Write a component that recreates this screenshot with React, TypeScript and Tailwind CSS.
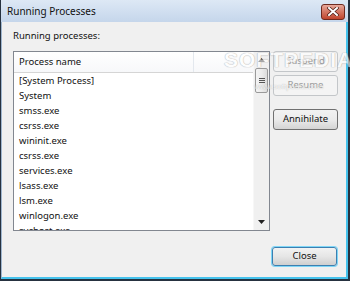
import React from "react";

const items = [
  "[System Process]",
  "System",
  "smss.exe",
  "csrss.exe",
  "wininit.exe",
  "csrss.exe",
  "services.exe",
  "lsass.exe",
  "lsm.exe",
  "winlogon.exe",
  "svchost.exe",
  "svchost.exe",
];

const font = { fontFamily: '"Noto Sans", "Liberation Sans", sans-serif' };

function Btn({ label, disabled, def, className = "" }: { label: string; disabled?: boolean; def?: boolean; className?: string }) {
  if (disabled) {
    return (
      <div className={`h-[21px] w-[65px] shrink-0 rounded-[3px] border border-[#c3c6c9] bg-[#f4f4f4] flex items-center justify-center text-[9.5px] text-[#9c9c9c] ${className}`}>
        {label}
      </div>
    );
  }
  if (def) {
    return (
      <div className={`h-[19px] w-[65px] shrink-0 rounded-[3px] border border-[#3c7fb1] shadow-[0_0_0_1px_#7fd6f6] bg-gradient-to-b from-[#f2f2f2] via-[#e6e6e6] to-[#cfcfcf] flex items-center justify-center text-[9.5px] text-[#111] ${className}`}>
        {label}
      </div>
    );
  }
  return (
    <div className={`h-[21px] w-[65px] shrink-0 rounded-[3px] border border-[#707070] bg-gradient-to-b from-[#f2f2f2] via-[#ebebeb] to-[#d4d4d4] flex items-center justify-center text-[9.5px] text-[#111] ${className}`}>
      {label}
    </div>
  );
}

export default function App() {
  return (
    <div className="relative w-[350px] h-[281px] flex flex-col border-l border-r-2 border-b-2 border-[#263240] bg-[#c9d9ec]" style={font}>
      {/* Title bar */}
      <div className="h-[22px] shrink-0 flex items-center justify-between pl-[6px] pr-[3px] bg-gradient-to-b from-[#dde8f5] to-[#c5d6eb]">
        <span className="text-[10px] text-[#111] leading-none">Running Processes</span>
        <div className="mt-[1px] h-[16px] w-[24px] rounded-[3px] border border-[#6e2a1f] bg-gradient-to-b from-[#e8a99b] via-[#d37461] to-[#c0442c] flex items-center justify-center">
          <svg width="12" height="9" viewBox="0 0 12 9">
            <path d="M2 1 L10 8 M10 1 L2 8" stroke="#4a1a12" strokeWidth="3.4" strokeLinecap="square" />
            <path d="M2 1 L10 8 M10 1 L2 8" stroke="#ffffff" strokeWidth="2" strokeLinecap="square" />
          </svg>
        </div>
      </div>
      {/* Client */}
      <div className="flex-1 flex flex-col bg-[#f0f0f0] border-l border-[#9fb6cf] border-r-2 border-b-2 border-r-[#45c2ec] border-b-[#45c2ec] pl-[11px]">
        <div className="mt-[7px] h-[14px] shrink-0 leading-[14px] text-[9.5px] text-[#111]">Running processes:</div>
        <div className="mt-[8px] shrink-0 flex gap-[3px]">
          {/* List */}
          <div className="w-[257px] h-[180px] shrink-0 border border-[#828790] bg-white flex overflow-hidden">
            <div className="flex-1 flex flex-col overflow-hidden">
              <div className="h-[21px] shrink-0 flex border-b border-[#d5d5d5] bg-gradient-to-b from-white to-[#f7f8fa]">
                <div className="w-[179px] pl-[5px] flex items-center text-[9.5px] text-[#111]">Process name</div>
                <div className="w-px bg-[#e3e8ee]" />
              </div>
              <div className="mt-[1px] shrink-0 flex flex-col">
                {items.map((t, i) => (
                  <div key={i} className="h-[15px] shrink-0 pl-[5px] flex items-center text-[9.5px] text-[#111] whitespace-nowrap">
                    {t}
                  </div>
                ))}
              </div>
            </div>
            {/* Scrollbar */}
            <div className="w-[16px] shrink-0 flex flex-col bg-[#f0f0f0] border-l border-[#f7f7f7]">
              <div className="h-[16px] shrink-0 flex items-center justify-center">
                <svg width="7" height="4" viewBox="0 0 7 4"><path d="M3.5 0 L7 4 L0 4 Z" fill="#222" /></svg>
              </div>
              <div className="mx-[1px] h-[25px] shrink-0 rounded-[2px] border border-[#9a9a9a] bg-gradient-to-r from-[#f4f4f4] via-[#ececec] to-[#dcdcdc] flex flex-col items-center justify-center gap-[1px]">
                <div className="w-[6px] h-px bg-[#555]" />
                <div className="w-[6px] h-px bg-[#555]" />
                <div className="w-[6px] h-px bg-[#555]" />
              </div>
              <div className="flex-1" />
              <div className="h-[16px] shrink-0 flex items-center justify-center">
                <svg width="7" height="4" viewBox="0 0 7 4"><path d="M0 0 L7 0 L3.5 4 Z" fill="#222" /></svg>
              </div>
            </div>
          </div>
          {/* Buttons */}
          <div className="flex flex-col">
            <Btn label="Suspend" disabled />
            <Btn label="Resume" disabled className="mt-[3px]" />
            <Btn label="Annihilate" className="mt-[13px]" />
          </div>
        </div>
        <div className="mt-[16px] shrink-0 flex justify-end pr-[9px]">
          <Btn label="Close" def />
        </div>
      </div>
      {/* Softpedia watermark */}
      <div className="pointer-events-none absolute left-[223px] top-[49px] flex flex-col items-center opacity-60">
        <span className="text-[21px] leading-none font-bold tracking-[1px] text-white [text-shadow:0_0_1px_#8a8a8a,0_0_1px_#8a8a8a]" style={{ fontFamily: '"Liberation Sans", sans-serif' }}>SOFTPEDIA</span>
        <span className="mt-[13px] text-[8px] leading-none text-white [text-shadow:0_0_1px_#777]" style={{ fontFamily: '"Liberation Sans", sans-serif' }}>www.softpedia.com</span>
      </div>
    </div>
  );
}
